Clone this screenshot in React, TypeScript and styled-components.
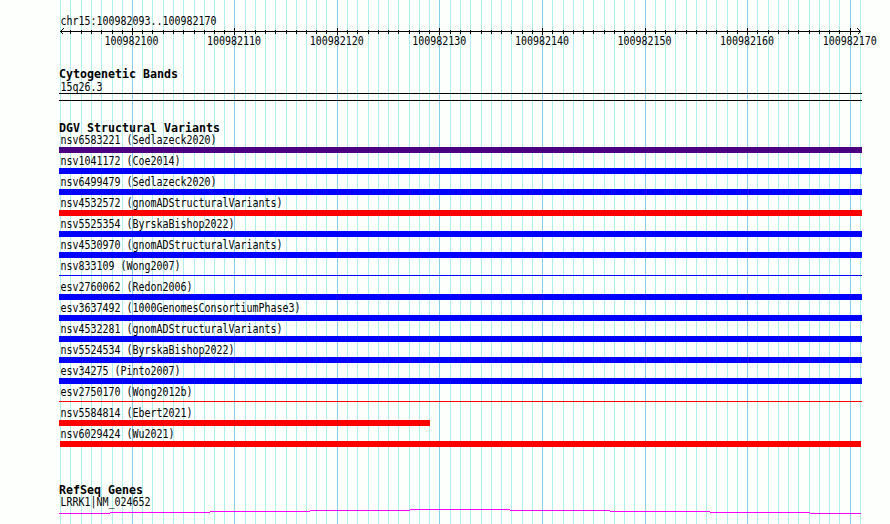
import React from 'react';
import styled, { createGlobalStyle } from 'styled-components';

const GlobalStyle = createGlobalStyle`
  * { box-sizing: border-box; }
  body { margin: 0; background: #fdfffc; overflow: hidden; }
`;

const Page = styled.main`
  position: relative;
  width: 890px;
  height: 524px;
  padding-left: 59px;
  overflow: hidden;
  color: #000;
  background: #fdfffc;
`;
const Grid = styled.svg`
  position: absolute;
  inset: 0;
`;
const Content = styled.div`
  position: relative;
  display: flex;
  flex-direction: column;
`;
const Label = styled.div<{ $line?: number }>`
  height: ${p => p.$line ?? 12}px;
  line-height: ${p => p.$line ?? 12}px;
  padding-left: 1px;
  font-family: "DejaVu Sans Mono", monospace;
  font-size: 10px;
  letter-spacing: -0.02px;
  white-space: pre;
  transform: translate(0.5px, 0.5px) scaleY(1.15);
`;
const Heading = styled.h2`
  margin: 0;
  height: 12px;
  font: bold 11.63px/12px "DejaVu Sans Mono", monospace;
  white-space: pre;
`;
const Header = styled.header`
  height: 68px;
  padding-top: 15px;
`;
const Chart = styled.svg`
  display: block;
`;
const Numbers = styled.div`
  display: grid;
  grid-template-columns: repeat(8, 102.6px);
  margin-left: 44px;
`;
const Band = styled.div`
  width: 803px;
  height: 8px;
  border: solid #000;
  border-width: 1px 0;
`;
const Track = styled.section<{ $h: number }>`
  height: ${p => p.$h}px;
`;
const Feature = styled.div`
  height: 21px;
`;
const Bar = styled.div<{ $c: string; $thin?: boolean; $w?: number; $x?: number }>`
  width: ${p => p.$w ?? 803}px;
  height: ${p => (p.$thin ? 1 : 6)}px;
  margin-top: ${p => (p.$thin ? 3 : 1)}px;
  margin-left: ${p => p.$x ?? 0}px;
  background: ${p => p.$c};
`;

const BLUE = '#0000ff';
const RED = '#ff0000';
const variants: { name: string; c: string; thin?: boolean; w?: number; x?: number }[] = [
  { name: 'nsv6583221 (Sedlazeck2020)', c: '#4b0082' },
  { name: 'nsv1041172 (Coe2014)', c: BLUE },
  { name: 'nsv6499479 (Sedlazeck2020)', c: BLUE },
  { name: 'nsv4532572 (gnomADStructuralVariants)', c: RED },
  { name: 'nsv5525354 (ByrskaBishop2022)', c: BLUE },
  { name: 'nsv4530970 (gnomADStructuralVariants)', c: BLUE },
  { name: 'nsv833109 (Wong2007)', c: BLUE, thin: true },
  { name: 'esv2760062 (Redon2006)', c: BLUE },
  { name: 'esv3637492 (1000GenomesConsortiumPhase3)', c: BLUE },
  { name: 'nsv4532281 (gnomADStructuralVariants)', c: BLUE },
  { name: 'nsv5524534 (ByrskaBishop2022)', c: BLUE },
  { name: 'esv34275 (Pinto2007)', c: BLUE },
  { name: 'esv2750170 (Wong2012b)', c: RED, thin: true },
  { name: 'nsv5584814 (Ebert2021)', c: RED, w: 371 },
  { name: 'nsv6029424 (Wu2021)', c: RED, w: 801, x: 1 },
];

// One grid line per base, snapped to whole pixels; every tenth base is major.
const ticks = [
  60, 70, 81, 91, 101, 112, 122, 132, 142, 152,
  163, 173, 183, 194, 204, 214, 224, 234, 245, 255,
  265, 275, 286, 296, 306, 316, 326, 337, 347, 357,
  368, 378, 388, 398, 409, 419, 429, 439, 450, 460,
  470, 481, 491, 501, 511, 522, 532, 542, 552, 563,
  573, 583, 593, 604, 614, 624, 634, 645, 655, 665,
  675, 686, 696, 706, 716, 727, 737, 747, 757, 768,
  778, 788, 798, 809, 819, 829, 839, 850, 860,
].map((x, i) => ({ x, major: i % 10 === 7 }));

const positions = [100, 110, 120, 130, 140, 150, 160, 170];

// [start, end, y] of each piece of the intron line
const steps = [
  [0, 51, 5], [51, 151, 4], [151, 251, 3], [251, 351, 2], [351, 451, 1],
  [451, 551, 2], [551, 651, 3], [651, 751, 4], [751, 802, 5],
];

export default function App() {
  return (
    <Page>
      <GlobalStyle />
      <Grid width="890" height="524" shapeRendering="crispEdges">
        {ticks.map(t => (
          <rect key={t.x} x={t.x} y="0" width="1" height="524" fill={t.major ? '#87ceeb' : '#afeeee'} />
        ))}
      </Grid>
      <Content>
        <Header>
          <Label>chr15:100982093..100982170</Label>
          <Chart width="803" height="8" shapeRendering="crispEdges">
            <path d="M1 4.5H802" stroke="#000" />
            {ticks.slice(1, -1).map(t => (
              <rect key={t.x} x={t.x - 59} y={t.major ? 1 : 3} width="1" height={t.major ? 7 : 4} />
            ))}
            <path d="M4.5 1.5 1.5 4.5l3 3M798.5 1.5l3 3-3 3" fill="none" stroke="#000" />
          </Chart>
          <Numbers>
            {positions.map(n => <Label key={n}>{`100982${n}`}</Label>)}
          </Numbers>
        </Header>
        <Track $h={54}>
          <Heading>Cytogenetic Bands</Heading>
          <Label $line={13}>15q26.3</Label>
          <Band />
        </Track>
        <Track $h={362}>
          <Heading>DGV Structural Variants</Heading>
          {variants.map(v => (
            <Feature key={v.name}>
              <Label>{v.name}</Label>
              <Bar $c={v.c} $thin={v.thin} $w={v.w} $x={v.x} />
            </Feature>
          ))}
        </Track>
        <Track $h={40}>
          <Heading>RefSeq Genes</Heading>
          <Label>LRRK1|NM_024652</Label>
          <Chart width="803" height="8" shapeRendering="crispEdges">
            {steps.map(([a, b, y]) => (
              <rect key={a} x={a} y={y} width={b - a} height="1" fill="#ff00ff" />
            ))}
          </Chart>
        </Track>
      </Content>
    </Page>
  );
}
